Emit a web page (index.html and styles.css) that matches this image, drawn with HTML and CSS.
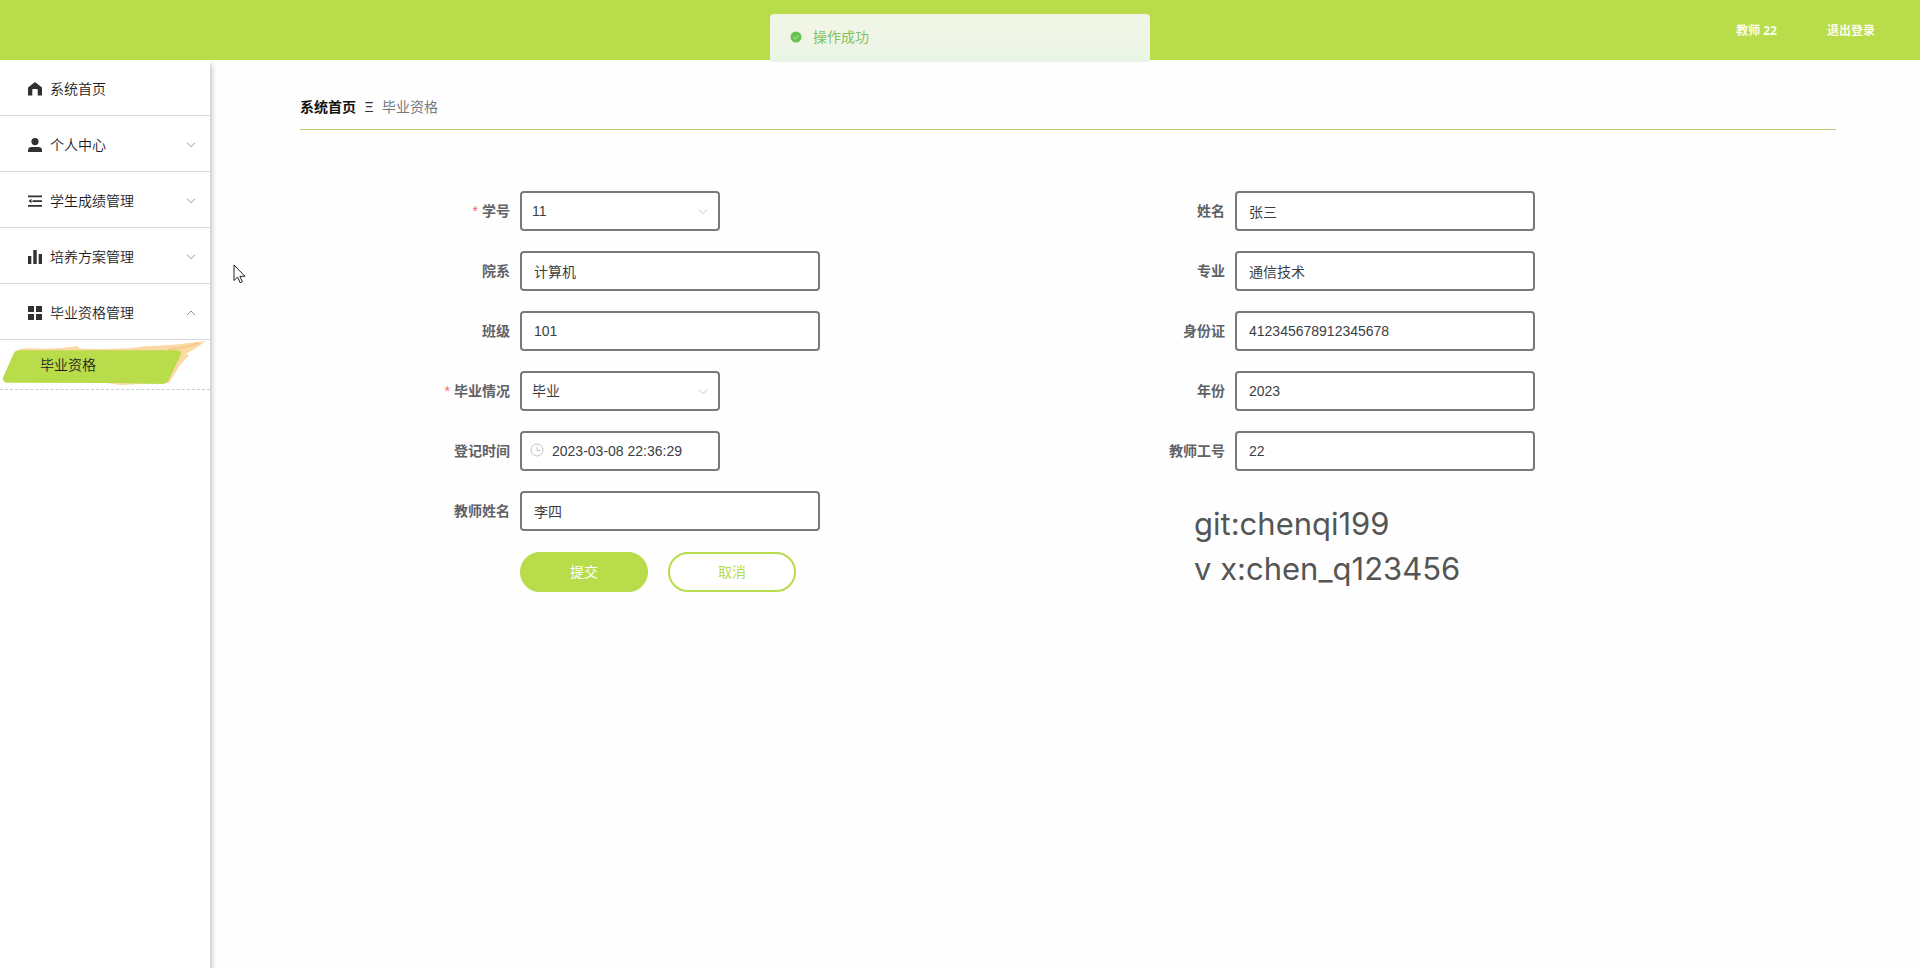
FILE: index.html
```html
<!DOCTYPE html>
<html lang="zh-CN">
<head>
<meta charset="utf-8">
<title>毕业资格</title>
<link rel="stylesheet" href="styles.css">
</head>
<body>
<header class="topbar">
  <span class="user">教师 22</span>
  <a class="logout" href="#">退出登录</a>
  <div class="toast" role="status">
    <svg class="toast-icon" viewBox="0 0 12 12"><circle cx="6" cy="6" r="5.5" fill="#67c250"/><path d="M3.4 6.1l1.8 1.8 3.400-3.600" fill="none" stroke="#a5dc8c" stroke-width="1.2"/></svg>
    <span>操作成功</span>
  </div>
</header>
<div class="shell">
  <nav class="sidebar">
    <a class="item" href="#">
      <svg class="icon" viewBox="0 0 14 14"><path d="M7 0L.6 4.900Q0 5.400 0 6v7.500h4.300V7.800a.8.8 0 0 1 .8-.8h3.800a.8.8 0 0 1 .8.8v5.700H14V6q0-.6-.6-1.100z"/></svg>
      <span>系统首页</span>
    </a>
    <a class="item" href="#">
      <svg class="icon" viewBox="0 0 14 14"><circle cx="7" cy="3.600" r="3.600"/><path d="M0 14v-1.800C0 10 1.600 9 3.400 9h7.200c1.800 0 3.400 1 3.400 3.200V14z"/></svg>
      <span>个人中心</span>
      <svg class="arrow" viewBox="0 0 10 6"><path d="M1 .7l4 4 4-4"/></svg>
    </a>
    <a class="item" href="#">
      <svg class="icon" viewBox="0 0 14 14"><path d="M0 1.500h14v1.700H0zM4.500 6.200H14v1.700H4.500zM0 11h14v1.700H0zM3.500 4.800v4.500L.5 7z"/></svg>
      <span>学生成绩管理</span>
      <svg class="arrow" viewBox="0 0 10 6"><path d="M1 .7l4 4 4-4"/></svg>
    </a>
    <a class="item" href="#">
      <svg class="icon" viewBox="0 0 14 14"><path d="M0 6h3.300v8H0zM5.300 0h3.400v14H5.300zM10.700 4H14v10h-3.300z"/></svg>
      <span>培养方案管理</span>
      <svg class="arrow" viewBox="0 0 10 6"><path d="M1 .7l4 4 4-4"/></svg>
    </a>
    <a class="item" href="#">
      <svg class="icon" viewBox="0 0 14 14"><path d="M0 0h6v6H0zM8 0h6v6H8zM0 8h6v6H0zM8 8h6v6H8z"/></svg>
      <span>毕业资格管理</span>
      <svg class="arrow" viewBox="0 0 10 6"><path d="M1 5l4-4 4 4"/></svg>
    </a>
    <a class="subitem" href="#">
      <svg class="brush" viewBox="0 0 210 50" preserveAspectRatio="none">
        <path d="M14 13Q18 8 32 8.500Q55 10 78 6Q76 9 90 9Q120 10 145 6.500Q170 6 206 1Q196 9 186 14L189 16L181 24L169 44L120 46L20 30z" fill="#fbd9a6"/>
        <path d="M168 10Q185 8 199 3" fill="none" stroke="#f8c985" stroke-width="2"/>
        <path d="M20 10.500H177q5 0 4 4L169 40q-2 5-7 5L120 44 7 43.500q-5-1-4-5L13 15q2-4.500 7-4.500z" fill="#b8dc4a"/>
      </svg>
      <span class="subtext">毕业资格</span>
    </a>
  </nav>
  <main class="main">
    <div class="crumbs">
      <a class="crumb-home" href="#">系统首页</a>
      <span class="crumb-sep">Ξ</span>
      <span class="crumb-here">毕业资格</span>
    </div>
    <form class="form">
      <div class="row required"><label for="sno">学号</label>
        <div class="pick"><select id="sno"><option>11</option></select><svg class="arrow" viewBox="0 0 10 6"><path d="M1 .7l4 4 4-4"/></svg></div></div>
      <div class="row"><label for="name">姓名</label><input id="name" value="张三"></div>
      <div class="row"><label for="dept">院系</label><input id="dept" value="计算机"></div>
      <div class="row"><label for="major">专业</label><input id="major" value="通信技术"></div>
      <div class="row"><label for="cls">班级</label><input id="cls" value="101"></div>
      <div class="row"><label for="idno">身份证</label><input id="idno" value="412345678912345678"></div>
      <div class="row required"><label for="state">毕业情况</label>
        <div class="pick"><select id="state"><option>毕业</option></select><svg class="arrow" viewBox="0 0 10 6"><path d="M1 .7l4 4 4-4"/></svg></div></div>
      <div class="row"><label for="year">年份</label><input id="year" value="2023"></div>
      <div class="row"><label for="time">登记时间</label>
        <div class="pick"><svg class="clock" viewBox="0 0 14 14"><circle cx="7" cy="7" r="6"/><path d="M7 3.500V7.500h3.500"/></svg><input id="time" class="dated" value="2023-03-08 22:36:29"></div></div>
      <div class="row"><label for="tno">教师工号</label><input id="tno" value="22"></div>
      <div class="row"><label for="tname">教师姓名</label><input id="tname" value="李四"></div>
      <div class="note">git:chenqi199<br>v x:chen_q123456</div>
      <div class="actions">
        <button class="btn primary" type="submit">提交</button>
        <button class="btn plain" type="button">取消</button>
      </div>
    </form>
  </main>
</div>
<svg class="pointer" viewBox="0 0 13 20"><path d="M1 1v15.500l3.600-3.400 2.500 5.600 2.200-1-2.400-5.400H12z" fill="#fff" stroke="#222" stroke-width="1"/></svg>
</body>
</html>
```
FILE: styles.css
```css
* { box-sizing: border-box; }
body {
  margin: 0;
  min-height: 100vh;
  display: flex;
  flex-direction: column;
  background: #fefefe;
  color: #303133;
  font: 14px/20px "Liberation Sans", "Noto Sans CJK SC", sans-serif;
}
a { color: inherit; text-decoration: none; }
.topbar {
  position: relative;
  display: flex;
  justify-content: flex-end;
  align-items: center;
  gap: 50px;
  height: 60px;
  padding: 2px 45px 0;
  background: #b8dc4a;
  color: #fafdf0;
  font: bold 12px/20px "Noto Sans", "Noto Sans CJK SC", sans-serif;
}
.toast {
  position: absolute;
  top: 14px;
  left: 50%;
  width: 380px;
  height: 48px;
  margin-left: -190px;
  padding: 0 20px 3px;
  display: flex;
  align-items: center;
  gap: 11px;
  border-radius: 4px 4px 0 0;
  background: linear-gradient(#f0f5e6 50%, #e8f5e6);
  color: #82c25e;
  font: 14px/20px "Liberation Sans", "Noto Sans CJK SC", sans-serif;
}
.toast-icon { width: 12px; height: 12px; }
.shell { display: flex; flex: 1; }
.sidebar {
  width: 210px;
  flex: none;
  background: #fff;
  color: #1c1d1f;
  box-shadow: 1px 4px 6px rgba(0, 0, 0, 0.3);
  clip-path: inset(0 -12px 0 0);
  font-weight: 350;
}
.item {
  display: flex;
  align-items: center;
  gap: 8px;
  height: 56px;
  padding: 2px 14px 0 28px;
  border-bottom: 1px solid #d9d9d9;
}
.icon { width: 14px; height: 14px; fill: #303133; }
.arrow { width: 10px; height: 6px; margin-left: auto; fill: none; stroke: #909399; }
.subitem {
  position: relative;
  display: flex;
  align-items: center;
  height: 50px;
  padding-left: 40px;
  border-bottom: 1px dashed #ccc;
}
.brush { position: absolute; inset: 0; width: 100%; height: 100%; }
.subtext { position: relative; }
.main { flex: 1; padding: 34px 84px 40px 90px; }
.crumbs {
  display: flex;
  align-items: center;
  gap: 8px;
  height: 36px;
  padding-bottom: 10px;
  border-bottom: 1px solid #c6c878;
}
.crumb-home { color: #111; font-weight: bold; }
.crumb-sep { width: 10px; text-align: center; color: #303133; }
.crumb-here { color: #76797e; }
.form {
  display: grid;
  grid-template-columns: 1fr 1fr;
  row-gap: 20px;
  padding: 61px 53px 0;
}
.row { display: flex; align-items: center; gap: 10px; }
.row label {
  width: 157px;
  text-align: right;
  color: #606266;
  font-weight: bold;
}
.required label::before { content: "*"; margin-right: 4px; color: #f56c6c; font-weight: normal; }
input, select {
  width: 300px;
  height: 40px;
  padding: 0 12px;
  border: 2px solid #797979;
  border-radius: 4px;
  background: #fff;
  color: #3c3e42;
  font: inherit;
}
select { width: 100%; padding: 0 10px; appearance: none; }
.pick { position: relative; width: 200px; }
.pick .arrow { position: absolute; right: 12px; top: 18px; stroke: #c0c4cc; }
.clock { position: absolute; left: 10px; top: 12px; width: 14px; height: 14px; fill: none; stroke: #c0c4cc; }
.dated { width: 100%; padding-left: 30px; }
.note {
  grid-row: span 2;
  padding: 10px 0 0 126px;
  color: #555;
  font: 31px/45px Inter, sans-serif;
}
.actions { display: flex; gap: 20px; padding: 1px 0 0 167px; }
.btn {
  width: 128px;
  height: 40px;
  border: 2px solid #b8dc4a;
  border-radius: 20px;
  font: inherit;
}
.primary { background: #b8dc4a; color: #fff; }
.plain { background: #fff; color: #b8dc4a; }
.pointer { position: absolute; left: 233px; top: 264px; width: 13px; height: 20px; }
```
